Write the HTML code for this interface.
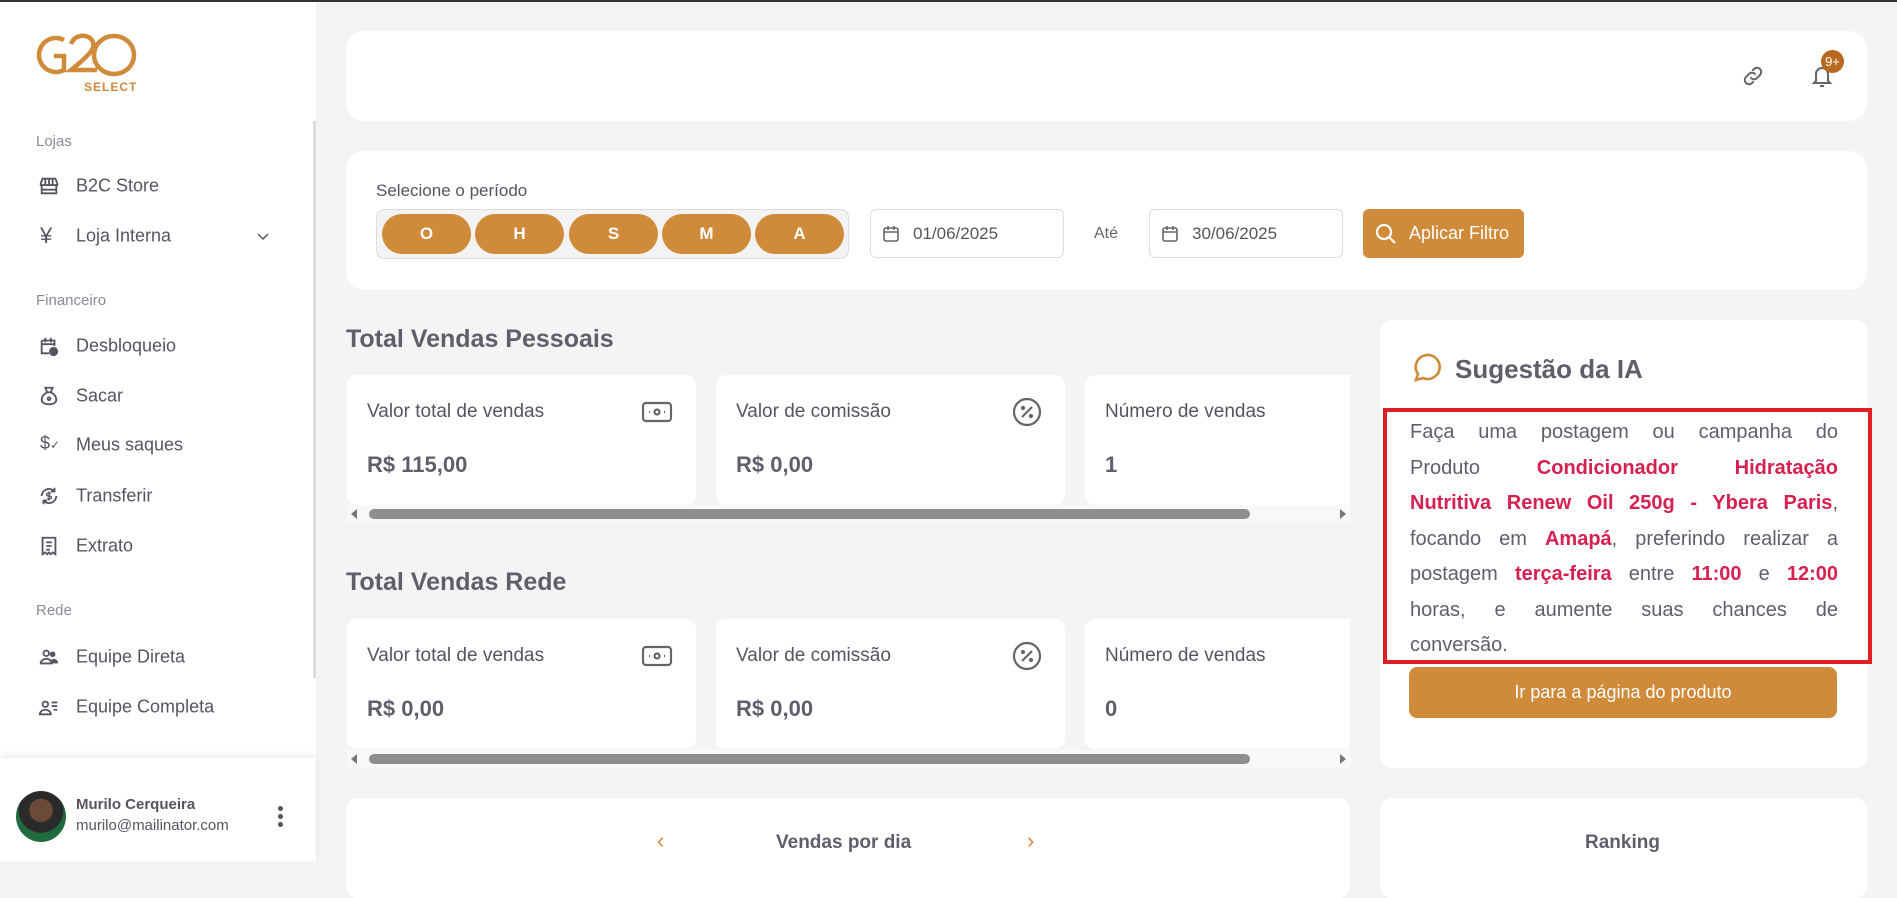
<!DOCTYPE html>
<html><head><meta charset="utf-8"><style>
*{box-sizing:border-box;margin:0;padding:0}
body{width:1897px;height:861px;overflow:hidden;background:#f4f4f4;font-family:"Liberation Sans",sans-serif;color:#5f5f6b;position:relative}
.abs{position:absolute}
.side{left:0;top:0;width:316px;height:861px;background:#fff}
.card{background:#fff;border-radius:18px;position:absolute}
.sec{position:absolute;left:36px;font-size:15px;color:#8a8a94}
.mi{position:absolute;left:76px;font-size:18px;color:#55555f;transform:translateY(-50%)}
.ic{position:absolute;left:38px;width:22px;height:22px;transform:translateY(-50%)}
.pb{position:absolute;top:214px;width:89px;height:40px;border-radius:20px;background:#cf8a3a;color:#fff;font-weight:bold;font-size:17px;text-align:center;line-height:40px}
.inp{position:absolute;top:209px;height:49px;border:1px solid #ddd;border-radius:6px;background:#fff;font-size:17px;color:#555;line-height:47px;padding-left:42px}
.h2{position:absolute;left:346px;font-size:25px;font-weight:bold;color:#5f5f6b}
.sc{position:absolute;background:#fff;border-radius:10px;height:130px}
.sc .l{position:absolute;left:20px;top:26px;font-size:19px;color:#55555f}
.sc .v{position:absolute;left:20px;top:77px;font-size:22px;font-weight:bold;color:#5f5f6b}
.bar{position:absolute;left:347px;width:1003px;height:18px;background:#f8f8f8}
.bar .t{position:absolute;left:22px;right:100px;top:4px;height:10px;border-radius:5px;background:#8e8e8e}
.r{color:#d6204f;font-weight:bold}
.jl{display:block;text-align:justify;text-align-last:justify;white-space:nowrap;height:35.5px}
</style></head><body>
<div class="abs" style="left:0;top:0;width:1897px;height:2px;background:#333;z-index:5"></div>
<div class="abs side">
  <svg class="abs" style="left:34px;top:32px" width="104" height="46" viewBox="0 0 104 46" fill="none" stroke="#cf8a3a" stroke-width="4.5"><path d="M30 8A17 17 0 1 0 30 38V24H20"/><path d="M37 12c2-6 8-9 14-8s10 6 8 12c-2 5-12 14-22 22h26"/><ellipse cx="80" cy="23" rx="20" ry="19"/></svg>
  <div class="abs" style="left:84px;top:80px;font-size:12px;color:#cf8a3a;font-weight:bold;letter-spacing:1px">SELECT</div>
  <div class="abs" style="left:313px;top:121px;width:3px;height:557px;background:#ddd"></div>
  <div class="sec" style="top:133px">Lojas</div>
  <svg class="ic" style="top:186px" viewBox="0 0 24 24" fill="none" stroke="#55555f" stroke-width="2"><path d="M3 9l2-5h14l2 5v2H3zM4 11v9h16v-9M8 4v7M12 4v7M16 4v7M4 16h16"/></svg>
  <div class="mi" style="top:186px">B2C Store</div>
  <div class="abs" style="left:40px;top:223px;font-size:22px;color:#55555f">¥</div>
  <div class="mi" style="top:236px">Loja Interna</div>
  <svg class="abs" style="left:256px;top:229px" width="14" height="14" viewBox="0 0 14 14" fill="none" stroke="#55555f" stroke-width="1.5"><path d="M2 5l5 5 5-5"/></svg>
  <div class="sec" style="top:292px">Financeiro</div>
  <svg class="ic" style="top:346px" viewBox="0 0 24 24" fill="none" stroke="#55555f" stroke-width="2"><path d="M4 6h14v6M4 6v14h8M4 10h14M8 3v5M14 3v5"/><circle cx="17" cy="18" r="4" fill="#55555f"/></svg>
  <div class="mi" style="top:346px">Desbloqueio</div>
  <svg class="ic" style="top:396px" viewBox="0 0 24 24" fill="none" stroke="#55555f" stroke-width="2"><path d="M8 3h8l-2 5h-4zM10 8c-4 2-6 5-6 8 0 3 3 5 8 5s8-2 8-5c0-3-2-6-6-8"/><circle cx="12" cy="15" r="1.5"/></svg>
  <div class="mi" style="top:396px">Sacar</div>
  <div class="abs" style="left:40px;top:433px;font-size:18px;color:#55555f">$<span style="font-size:12px">✓</span></div>
  <div class="mi" style="top:445px">Meus saques</div>
  <svg class="ic" style="top:496px" viewBox="0 0 24 24" fill="none" stroke="#55555f" stroke-width="2"><path d="M20 12a8 8 0 0 1-14 5M4 12a8 8 0 0 1 14-5M18 3v4h-4M6 21v-4h4"/><path d="M12 7v10M14 9h-3a1.5 1.5 0 0 0 0 3h2a1.5 1.5 0 0 1 0 3h-3" stroke-width="1.5"/></svg>
  <div class="mi" style="top:496px">Transferir</div>
  <svg class="ic" style="top:546px" viewBox="0 0 24 24" fill="none" stroke="#55555f" stroke-width="2"><path d="M5 3h14v18l-3-2-2 2-2-2-2 2-2-2-3 2zM9 8h6M9 12h6M9 16h4"/></svg>
  <div class="mi" style="top:546px">Extrato</div>
  <div class="sec" style="top:602px">Rede</div>
  <svg class="ic" style="top:657px" viewBox="0 0 24 24" fill="#55555f"><circle cx="9" cy="8" r="3" fill="none" stroke="#55555f" stroke-width="2"/><path d="M3 19c0-3 3-5 6-5s6 2 6 5z" fill="none" stroke="#55555f" stroke-width="2"/><circle cx="16" cy="9" r="3"/><path d="M13 19c1-4 3-5 4-5 3 0 5 2 5 5z"/></svg>
  <div class="mi" style="top:657px">Equipe Direta</div>
  <svg class="ic" style="top:707px" viewBox="0 0 24 24" fill="none" stroke="#55555f" stroke-width="2"><circle cx="8" cy="9" r="3"/><path d="M2 20c0-3 3-5 6-5s6 2 6 5zM15 7h6M15 11h6M17 15h4"/></svg>
  <div class="mi" style="top:707px">Equipe Completa</div>
  <div class="abs" style="left:0;top:758px;width:316px;height:103px;background:#fff;box-shadow:0 -4px 6px rgba(0,0,0,.06)"></div>
  <div class="abs" style="left:16px;top:791px;width:50px;height:51px;border-radius:50%;background:radial-gradient(circle at 50% 38%,#6b4a3a 0 28%,#2a2a2a 30% 55%,#1f6b3e 56%)"></div>
  <div class="abs" style="left:76px;top:796px;font-size:15px;font-weight:bold;color:#55555f">Murilo Cerqueira</div>
  <div class="abs" style="left:76px;top:817px;font-size:15px;color:#55555f">murilo@mailinator.com</div>
  <div class="abs" style="left:278px;top:806px;width:5px;height:5px;border-radius:50%;background:#55555f;box-shadow:0 8px 0 #55555f,0 16px 0 #55555f"></div>
</div>

<div class="card" style="left:346px;top:31px;width:1521px;height:90px"></div>
<svg class="abs" style="left:1741px;top:64px" width="24" height="24" viewBox="0 0 24 24" fill="none" stroke="#666" stroke-width="2" stroke-linecap="round"><path d="M10 14a4 4 0 0 0 6 0l3-3a4 4 0 0 0-6-6l-1 1M14 10a4 4 0 0 0-6 0l-3 3a4 4 0 0 0 6 6l1-1"/></svg>
<svg class="abs" style="left:1810px;top:63px" width="24" height="26" viewBox="0 0 24 26" fill="none" stroke="#666" stroke-width="2"><path d="M6 18V11a6 6 0 0 1 12 0v7l2 2H4zM10 23h4"/></svg>
<div class="abs" style="left:1821px;top:50px;width:23px;height:23px;border-radius:50%;background:#b8691f;color:#fff;font-size:13px;text-align:center;line-height:23px">9+</div>

<div class="card" style="left:346px;top:151px;width:1521px;height:139px"></div>
<div class="abs" style="left:376px;top:181px;font-size:17px;color:#55555f">Selecione o período</div>
<div class="abs" style="left:376px;top:209px;width:473px;height:50px;border:1px solid #ddd;border-radius:8px;background:#f3f3f3"></div>
<div class="pb" style="left:382px">O</div><div class="pb" style="left:475px">H</div><div class="pb" style="left:569px">S</div><div class="pb" style="left:662px">M</div><div class="pb" style="left:755px">A</div>
<div class="inp" style="left:870px;width:194px">01/06/2025</div>
<svg class="abs" style="left:882px;top:225px" width="18" height="18" viewBox="0 0 18 18" fill="none" stroke="#666" stroke-width="1.6"><rect x="2" y="3" width="14" height="13" rx="2"/><path d="M2 7h14M6 1v4M12 1v4"/></svg>
<div class="abs" style="left:1094px;top:225px;font-size:16px;color:#666">Até</div>
<div class="inp" style="left:1149px;width:194px">30/06/2025</div>
<svg class="abs" style="left:1161px;top:225px" width="18" height="18" viewBox="0 0 18 18" fill="none" stroke="#666" stroke-width="1.6"><rect x="2" y="3" width="14" height="13" rx="2"/><path d="M2 7h14M6 1v4M12 1v4"/></svg>
<div class="abs" style="left:1363px;top:209px;width:161px;height:49px;border-radius:6px;background:#cf8a3a;color:#fff;font-size:18px;line-height:49px;padding-left:46px">Aplicar Filtro</div>
<svg class="abs" style="left:1374px;top:222px" width="24" height="24" viewBox="0 0 24 24" fill="none" stroke="#fff" stroke-width="2.2"><circle cx="10" cy="10" r="7"/><path d="M15 15l6 6"/></svg>

<div class="h2" style="top:325px">Total Vendas Pessoais</div>
<div class="sc" style="left:347px;top:375px;width:349px"><div class="l">Valor total de vendas</div><div class="v">R$ 115,00</div>
<svg class="abs" style="left:294px;top:25px" width="32" height="24" viewBox="0 0 32 24" fill="none" stroke="#666" stroke-width="2.2"><rect x="2" y="3" width="28" height="18" rx="3"/><circle cx="16" cy="12" r="2.5"/><path d="M8 12h1M23 12h1"/></svg></div>
<div class="sc" style="left:716px;top:375px;width:349px"><div class="l">Valor de comissão</div><div class="v">R$ 0,00</div>
<svg class="abs" style="left:295px;top:21px" width="32" height="32" viewBox="0 0 32 32" fill="none" stroke="#666" stroke-width="2.2"><circle cx="16" cy="16" r="13"/><path d="M11 21l10-10"/><circle cx="12" cy="12" r="1" fill="#666"/><circle cx="20" cy="20" r="1" fill="#666"/></svg></div>
<div class="sc" style="left:1085px;top:375px;width:265px;border-radius:10px 0 0 10px"><div class="l">Número de vendas</div><div class="v">1</div></div>
<div class="bar" style="top:505px"><div class="t"></div><div class="abs" style="left:4px;top:4px;border:5px solid transparent;border-right:6px solid #777;border-left:0"></div><div class="abs" style="right:4px;top:4px;border:5px solid transparent;border-left:6px solid #777;border-right:0"></div></div>

<div class="h2" style="top:568px">Total Vendas Rede</div>
<div class="sc" style="left:347px;top:619px;width:349px"><div class="l">Valor total de vendas</div><div class="v">R$ 0,00</div>
<svg class="abs" style="left:294px;top:25px" width="32" height="24" viewBox="0 0 32 24" fill="none" stroke="#666" stroke-width="2.2"><rect x="2" y="3" width="28" height="18" rx="3"/><circle cx="16" cy="12" r="2.5"/><path d="M8 12h1M23 12h1"/></svg></div>
<div class="sc" style="left:716px;top:619px;width:349px"><div class="l">Valor de comissão</div><div class="v">R$ 0,00</div>
<svg class="abs" style="left:295px;top:21px" width="32" height="32" viewBox="0 0 32 32" fill="none" stroke="#666" stroke-width="2.2"><circle cx="16" cy="16" r="13"/><path d="M11 21l10-10"/><circle cx="12" cy="12" r="1" fill="#666"/><circle cx="20" cy="20" r="1" fill="#666"/></svg></div>
<div class="sc" style="left:1085px;top:619px;width:265px;border-radius:10px 0 0 10px"><div class="l">Número de vendas</div><div class="v">0</div></div>
<div class="bar" style="top:750px"><div class="t"></div><div class="abs" style="left:4px;top:4px;border:5px solid transparent;border-right:6px solid #777;border-left:0"></div><div class="abs" style="right:4px;top:4px;border:5px solid transparent;border-left:6px solid #777;border-right:0"></div></div>

<div class="card" style="left:346px;top:798px;width:1004px;height:100px;border-radius:12px"></div>
<div class="abs" style="left:657px;top:828px;font-size:22px;color:#cf8a3a">‹</div>
<div class="abs" style="left:776px;top:832px;font-size:19px;font-weight:bold;color:#5f5f6b">Vendas por dia</div>
<div class="abs" style="left:1027px;top:828px;font-size:22px;color:#cf8a3a">›</div>
<div class="card" style="left:1380px;top:798px;width:487px;height:100px;border-radius:12px"></div>
<div class="abs" style="left:1585px;top:832px;font-size:19px;font-weight:bold;color:#5f5f6b">Ranking</div>

<div class="card" style="left:1380px;top:320px;width:487px;height:448px;border-radius:12px"></div>
<svg class="abs" style="left:1410px;top:352px" width="32" height="32" viewBox="0 0 32 32" fill="none" stroke="#cf8a3a" stroke-width="2.6"><path d="M6 28l2-6a12 12 0 1 1 5 4z"/></svg>
<div class="abs" style="left:1455px;top:354px;font-size:26px;font-weight:bold;color:#5f5f6b">Sugestão da IA</div>
<div class="abs" style="left:1383px;top:408px;width:489px;height:256px;border:4px solid #e01f26"></div>
<div class="abs" style="left:1410px;top:415px;width:428px;font-size:20px;line-height:35.5px;color:#5f5f6b">
<span class="jl">Faça uma postagem ou campanha do</span>
<span class="jl">Produto <span class="r">Condicionador Hidratação</span></span>
<span class="jl"><span class="r">Nutritiva Renew Oil 250g - Ybera Paris</span>,</span>
<span class="jl">focando em <span class="r">Amapá</span>, preferindo realizar a</span>
<span class="jl">postagem <span class="r">terça-feira</span> entre <span class="r">11:00</span> e <span class="r">12:00</span></span>
<span class="jl">horas, e aumente suas chances de</span>
<span style="display:block">conversão.</span>
</div>
<div class="abs" style="left:1409px;top:667px;width:428px;height:51px;border-radius:8px;background:#cf8a3a;color:#fff;font-size:18px;text-align:center;line-height:51px">Ir para a página do produto</div>
</body></html>
